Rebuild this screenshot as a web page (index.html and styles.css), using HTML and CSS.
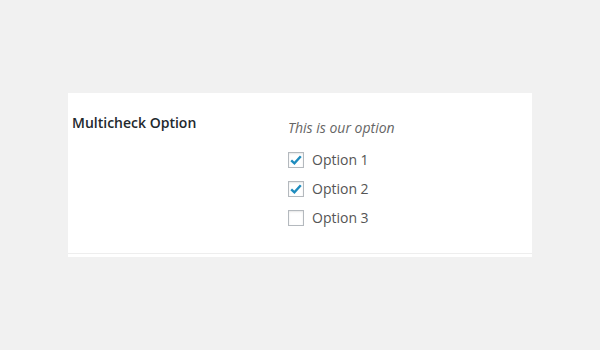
FILE: index.html
```html
<!DOCTYPE html>
<html>
<head>
<meta charset="utf-8">
<link rel="stylesheet" href="styles.css">
</head>
<body>
<div class="panel">
  <div class="row">
    <div class="label">Multicheck Option</div>
    <div class="field">
      <p class="desc">This is our option</p>
      <ul class="checks">
        <li><span class="box checked"><svg viewBox="0 0 16 16" width="16" height="16"><path d="M3.2 8.4 L6.4 11.4 L12.8 4.2" fill="none" stroke="#1e8cbe" stroke-width="2.4"/></svg></span>Option 1</li>
        <li><span class="box checked"><svg viewBox="0 0 16 16" width="16" height="16"><path d="M3.2 8.4 L6.4 11.4 L12.8 4.2" fill="none" stroke="#1e8cbe" stroke-width="2.4"/></svg></span>Option 2</li>
        <li><span class="box"></span>Option 3</li>
      </ul>
    </div>
  </div>
  <div class="rule"></div>
</div>
</body>
</html>
```
FILE: styles.css
```css
html, body {
  margin: 0;
  padding: 0;
  background: #f1f1f1;
  font-family: "Open Sans", "Noto Sans", sans-serif;
}
.panel {
  margin: 93px 0 0 68px;
  width: 464px;
  background: #fff;
  padding-bottom: 3px;
}
.row {
  display: grid;
  grid-template-columns: 220px 1fr;
  height: 160px;
}
.label {
  padding: 20px 0 0 4px;
  font-size: 14px;
  line-height: 20px;
  font-weight: 600;
  color: #23282d;
}
.field {
  padding-top: 25px;
}
.desc {
  margin: 0 0 7px;
  font-size: 14px;
  line-height: 20px;
  font-style: italic;
  color: #666;
}
.checks {
  list-style: none;
  margin: 0;
  padding: 0;
}
.checks li {
  display: flex;
  align-items: center;
  height: 29px;
  font-size: 14px;
  color: #555;
}
.box {
  width: 14px;
  height: 14px;
  border: 1px solid #b4b9be;
  box-shadow: inset 0 1px 2px rgba(0,0,0,0.1);
  margin-right: 8px;
  position: relative;
  flex: none;
}
.box svg {
  position: absolute;
  left: -1px;
  top: -1px;
}
.rule {
  height: 1px;
  background: #eeeeee;
}
```
